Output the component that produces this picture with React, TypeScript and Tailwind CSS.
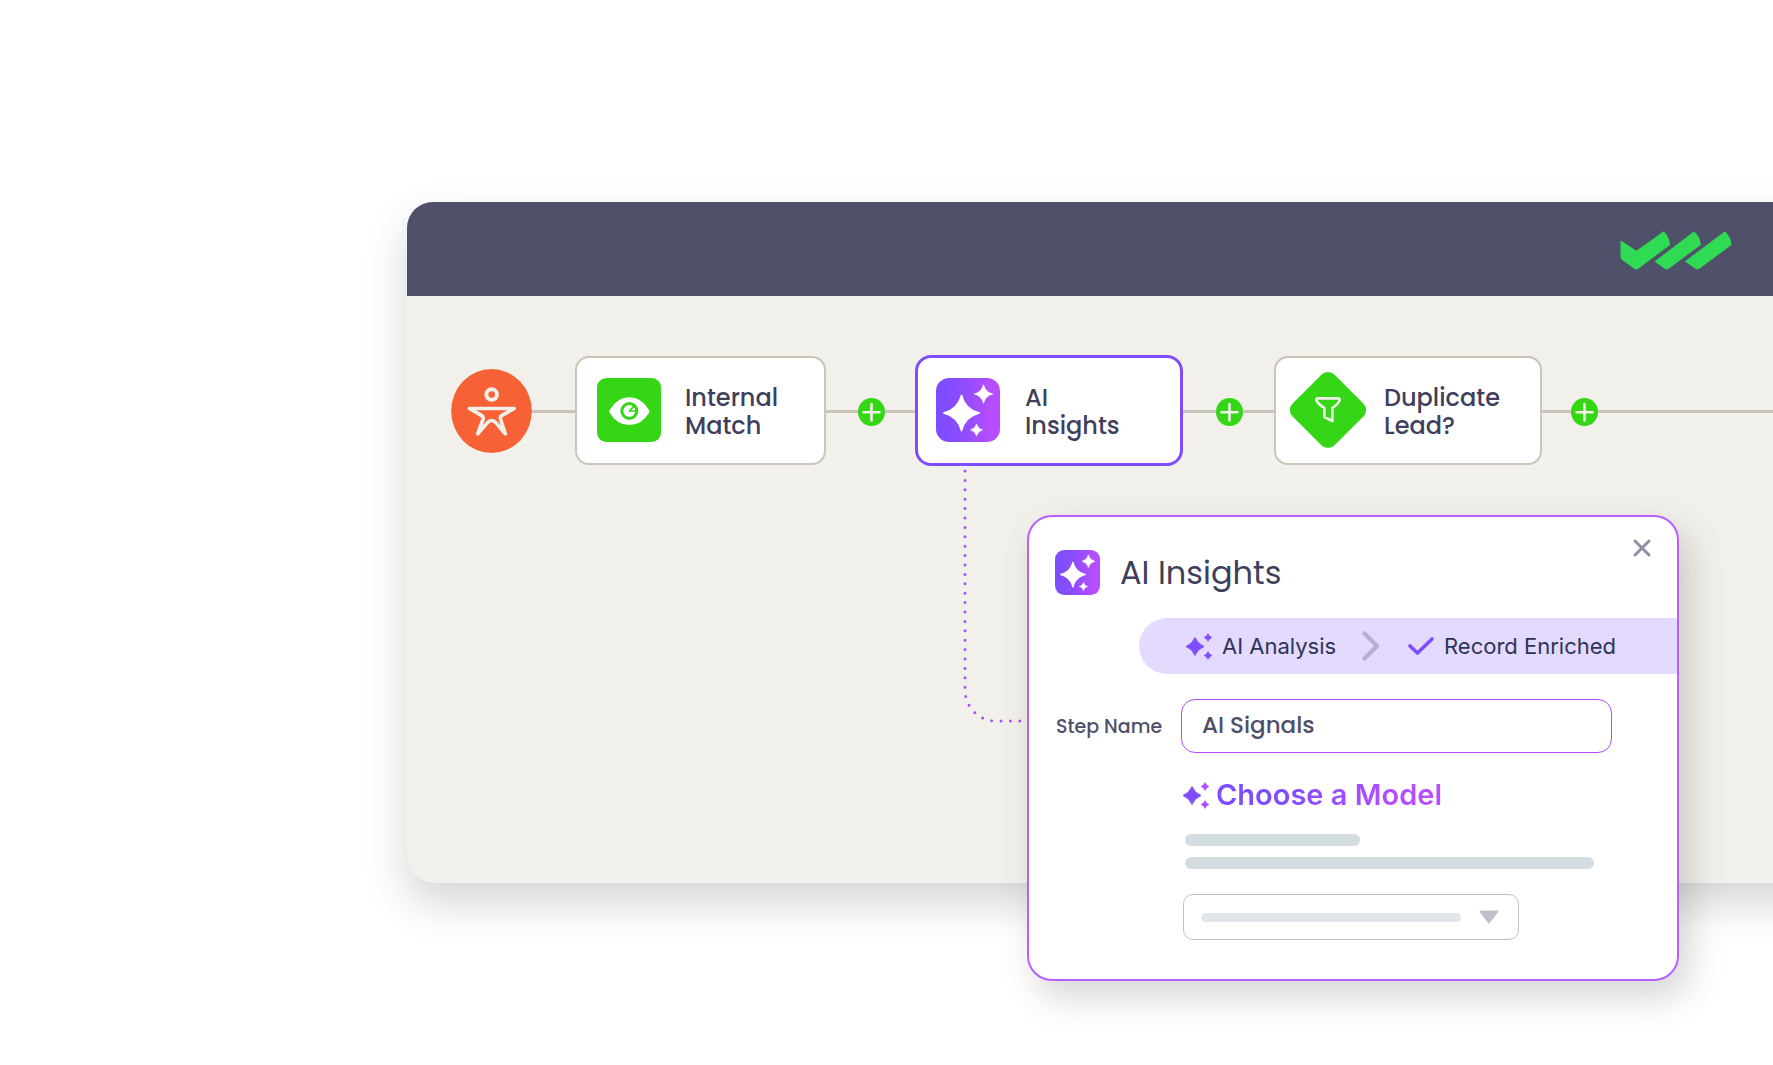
import React, { useId } from "react";

const STAR = "M0-1Q.2-.2 1 0Q.2 .2 0 1Q-.2 .2-1 0Q-.2-.2 0-1Z";

function Star({ x, y, r, fill }: { x: number; y: number; r: number; fill: string }) {
  return (
    <path
      d={STAR}
      transform={`translate(${x} ${y}) scale(${r})`}
      fill={fill}
      stroke={fill}
      strokeWidth={0.08}
      strokeLinejoin="round"
    />
  );
}

function InsightsIcon({ className }: { className: string }) {
  const id = useId();
  return (
    <svg viewBox="0 0 64 64" className={className} aria-hidden="true">
      <defs>
        <linearGradient id={id}>
          <stop offset="0.1" stopColor="#7f4dff" />
          <stop offset="0.45" stopColor="#8f4dff" />
          <stop offset="0.85" stopColor="#b64dff" />
        </linearGradient>
      </defs>
      <rect width="64" height="64" rx="13" fill={`url(#${id})`} />
      <Star x={25.5} y={35} r={17.8} fill="#fff" />
      <Star x={47.5} y={16} r={9.2} fill="#fff" />
      <Star x={40.5} y={52} r={6.2} fill="#fff" />
    </svg>
  );
}

function Sparkles({ accent }: { accent: string }) {
  return (
    <svg viewBox="0 0 26 27" className="h-[27px] w-[26px] shrink-0" aria-hidden="true">
      <g strokeLinejoin="round">
        <path d="M9 4.5Q11.5 11 18 13.5Q11.5 16 9 22.5Q6.500 16 0 13.500Q6.500 11 9 4.500Z" fill="#7f4dff" stroke="#7f4dff" strokeWidth="1" />
        <path d="M22 .5Q23 3.500 26 4.500Q23 5.500 22 8.500Q21 5.500 18 4.500Q21 3.500 22 .5Z" fill={accent} stroke={accent} strokeWidth=".6" />
        <path d="M22 18.500Q23 21.500 26 22.500Q23 23.500 22 26.500Q21 23.500 18 22.500Q21 21.500 22 18.500Z" fill={accent} stroke={accent} strokeWidth=".6" />
      </g>
    </svg>
  );
}

function Line({ className }: { className: string }) {
  return <div className={`mt-0.5 h-[3px] bg-[#cbc5b9] ${className}`} />;
}

function AddStep() {
  return (
    <button type="button" aria-label="Add step" className="mt-0.5 h-7 w-[27px] shrink-0">
      <svg viewBox="0 0 27 28" className="h-7 w-[27px]" aria-hidden="true">
        <ellipse cx="13.5" cy="14" rx="13.5" ry="14" fill="#34d616" />
        <path d="M13.500 6V22.500M5.500 14.200H21.500" stroke="#f2f0ea" strokeWidth="2.600" strokeLinecap="round" />
      </svg>
    </button>
  );
}

function StepLabel({ lines }: { lines: string[] }) {
  return (
    <div className="pt-0.5 text-2xl leading-7 font-medium text-[#3f3f5c]">
      {lines.map((line) => (
        <div key={line}>{line}</div>
      ))}
    </div>
  );
}

function Logo() {
  return (
    <svg viewBox="0 0 336 118" className="h-[39px] w-28" role="img" aria-label="Logo">
      <g fill="#2edb52">
        <path d="M4 30L48 60L131 1Q150 22 150 42L54 114Q48 119 42 114L4 87Q0 83 0 78V34Q0 28 4 30Z" />
        <path d="M103 92L223 1Q243 22 243 42L146 114Q140 119 134 114Z" />
        <path d="M195 92L316 1Q336 22 336 42L239 114Q233 119 227 114Z" />
      </g>
    </svg>
  );
}

function Header() {
  return (
    <header className="flex h-[94px] items-center justify-end rounded-tl-[26px] bg-[#4f5069] pt-0.5 pr-[105px]">
      <Logo />
    </header>
  );
}

function Flow() {
  return (
    <div className="flex items-center pl-11">
      <svg viewBox="0 0 243 253" className="h-[84px] w-[81px] shrink-0" role="img" aria-label="Start">
        <ellipse cx="121.500" cy="126.500" rx="121.500" ry="126.500" fill="#f66135" />
        <g fill="none" stroke="#f2f0ea" strokeLinejoin="round">
          <circle cx="122" cy="77" r="16" strokeWidth="12" />
          <path d="M55 119H190L154 139Q146 143 149 152L163 195L136 163Q122 147 108 163L80 195L96 152Q98 143 90 139Z" strokeWidth="11" />
        </g>
      </svg>
      <Line className="w-[43px] shrink-0" />
      <div className="flex h-[109px] w-[251px] shrink-0 items-center gap-6 rounded-[14px] border-2 border-[#cbc5b9] bg-white pl-5">
        <svg viewBox="0 0 192 192" className="mb-0.5 size-16 shrink-0" aria-hidden="true">
          <rect width="192" height="192" rx="28" fill="#34d616" />
          <path d="M38 96Q60 58 97 58T156 96Q160 100 156 104Q134 141 97 141T38 104Q35 100 38 96Z" fill="#fff" />
          <circle cx="97" cy="99" r="22.500" fill="none" stroke="#34d616" strokeWidth="9" />
          <path d="M97 99H117M97 99L110 86" stroke="#34d616" strokeWidth="5" strokeLinecap="round" />
        </svg>
        <StepLabel lines={["Internal", "Match"]} />
      </div>
      <Line className="w-8 shrink-0" />
      <AddStep />
      <Line className="w-[30px] shrink-0" />
      <div className="relative flex h-[111px] w-[268px] shrink-0 items-center gap-[25px] rounded-2xl border-3 border-[#7f4dff] bg-white pl-[18px]">
        <InsightsIcon className="mb-0.5 size-16 shrink-0" />
        <StepLabel lines={["AI", "Insights"]} />
        <svg viewBox="0 0 64 256" className="absolute top-[110px] left-[43px] h-64 w-16" aria-hidden="true">
          <path
            d="M4 3V222A31 31 0 0 0 35 253H62"
            fill="none"
            stroke="#b14dff"
            strokeWidth="3"
            strokeLinecap="round"
            strokeDasharray="0 9.4"
          />
        </svg>
      </div>
      <Line className="w-[33px] shrink-0" />
      <AddStep />
      <Line className="w-[31px] shrink-0" />
      <div className="flex h-[109px] w-[268px] shrink-0 items-center gap-[17px] rounded-[14px] border-2 border-[#cbc5b9] bg-white pl-[13px]">
        <svg viewBox="0 0 234 234" className="mb-0.5 size-[78px] shrink-0" aria-hidden="true">
          <rect x="28" y="28" width="178" height="178" rx="28" transform="rotate(45 117 117)" fill="#34d616" />
          <path
            d="M86 82H147Q152 82 152 87Q149 98 130 111V150L106 138V111Q86 98 82 87Q81 82 86 82Z"
            fill="none"
            stroke="#f2f0ea"
            strokeWidth="8"
            strokeLinejoin="round"
          />
        </svg>
        <StepLabel lines={["Duplicate", "Lead?"]} />
      </div>
      <Line className="w-[29px] shrink-0" />
      <AddStep />
      <Line className="min-w-8 flex-1" />
    </div>
  );
}

function InsightsPanel() {
  return (
    <section
      aria-labelledby="panel-title"
      className="absolute top-[313px] left-[620px] w-[652px] overflow-hidden rounded-[25px] border-2 border-[#b95fff] bg-white pt-[33px] pb-[39px] shadow-[10px_16px_36px_rgba(0,0,0,0.17)]"
    >
      <div className="flex h-[45px] items-center gap-5 pl-[26px]">
        <InsightsIcon className="size-[45px] shrink-0" />
        <h2 id="panel-title" className="text-[32px] leading-10 text-[#3f3f5c]">
          AI Insights
        </h2>
      </div>
      <button type="button" aria-label="Close" className="absolute top-[19px] right-[23px] p-0.5">
        <svg viewBox="0 0 20 20" className="size-5" aria-hidden="true">
          <path d="M3 3L17 17M17 3L3 17" stroke="#918fa3" strokeWidth="3" strokeLinecap="round" />
        </svg>
      </button>

      <div className="mt-[23px] ml-[110px] flex h-14 items-center rounded-l-full bg-[#e4d9ff] pl-[47px] font-['Inter',sans-serif] text-[22px] text-[#2c3557]">
        <Sparkles accent="#7f4dff" />
        <span className="ml-2.5 w-[140px]">AI Analysis</span>
        <svg viewBox="0 0 18 30" className="h-[30px] w-[18px] shrink-0" aria-hidden="true">
          <path d="M2.500 2.500L15 15L2.500 27.500" fill="none" stroke="#b8add4" strokeWidth="4.400" strokeLinecap="round" strokeLinejoin="round" />
        </svg>
        <svg viewBox="0 0 26 18" className="ml-7 h-[18px] w-[26px] shrink-0" aria-hidden="true">
          <path d="M2 9L9.500 16L24 2" fill="none" stroke="#7f4dff" strokeWidth="3.600" strokeLinecap="round" strokeLinejoin="round" />
        </svg>
        <span className="ml-2.5 whitespace-nowrap">Record Enriched</span>
      </div>

      <div className="mt-[25px] flex items-center pl-[27px] text-[#4f5069]">
        <label htmlFor="step-name" className="w-[125px] shrink-0 pt-0.5 text-[19px] font-medium">
          Step Name
        </label>
        <input
          id="step-name"
          defaultValue="AI Signals"
          className="h-[54px] w-[431px] rounded-[14px] border border-[#b14dff] px-5 pb-0.5 text-[23px] font-medium outline-none"
        />
      </div>

      <div className="ml-[154px]">
        <h3 className="mt-6 flex items-center gap-[7px]">
          <Sparkles accent="#b14dff" />
          <span className="bg-linear-to-r from-[#7f4dff] from-30% to-[#b64dff] to-80% bg-clip-text font-['Inter',sans-serif] text-[29px] leading-9 font-semibold text-transparent">
            Choose a Model
          </span>
        </h3>
        <div className="mt-[21px] ml-0.5 h-3 w-[175px] rounded-full bg-[#d3dce1]" />
        <div className="mt-[11px] ml-0.5 h-3 w-[409px] rounded-full bg-[#d3dce1]" />
        <div className="relative mt-[25px] w-[336px]">
          <select aria-label="Model" className="block h-[46px] w-full appearance-none rounded-[10px] border border-[#c0bfcb] bg-white outline-none">
            <option value="" />
          </select>
          <div className="pointer-events-none absolute inset-0 flex items-center justify-between pr-5 pl-[18px]">
            <div className="h-[9px] w-[260px] rounded-full bg-[#dfe7ea]" />
            <svg viewBox="0 0 20 14" className="h-3.5 w-5" aria-hidden="true">
              <path d="M1.500 1.500H18.500L10 12.500Z" fill="#c0bfcb" stroke="#c0bfcb" strokeWidth="2" strokeLinejoin="round" />
            </svg>
          </div>
        </div>
      </div>
    </section>
  );
}

export default function App() {
  return (
    <main className="min-h-screen overflow-hidden bg-white pt-[202px] pb-20 pl-[407px] font-['Poppins','Inter',sans-serif]">
      <div className="relative -mr-16 rounded-l-[28px] bg-[#f2f0ea] shadow-[0_20px_44px_rgba(0,0,0,0.17)]">
        <Header />
        <div className="pt-[59px] pb-[417px]">
          <Flow />
        </div>
        <InsightsPanel />
      </div>
    </main>
  );
}
